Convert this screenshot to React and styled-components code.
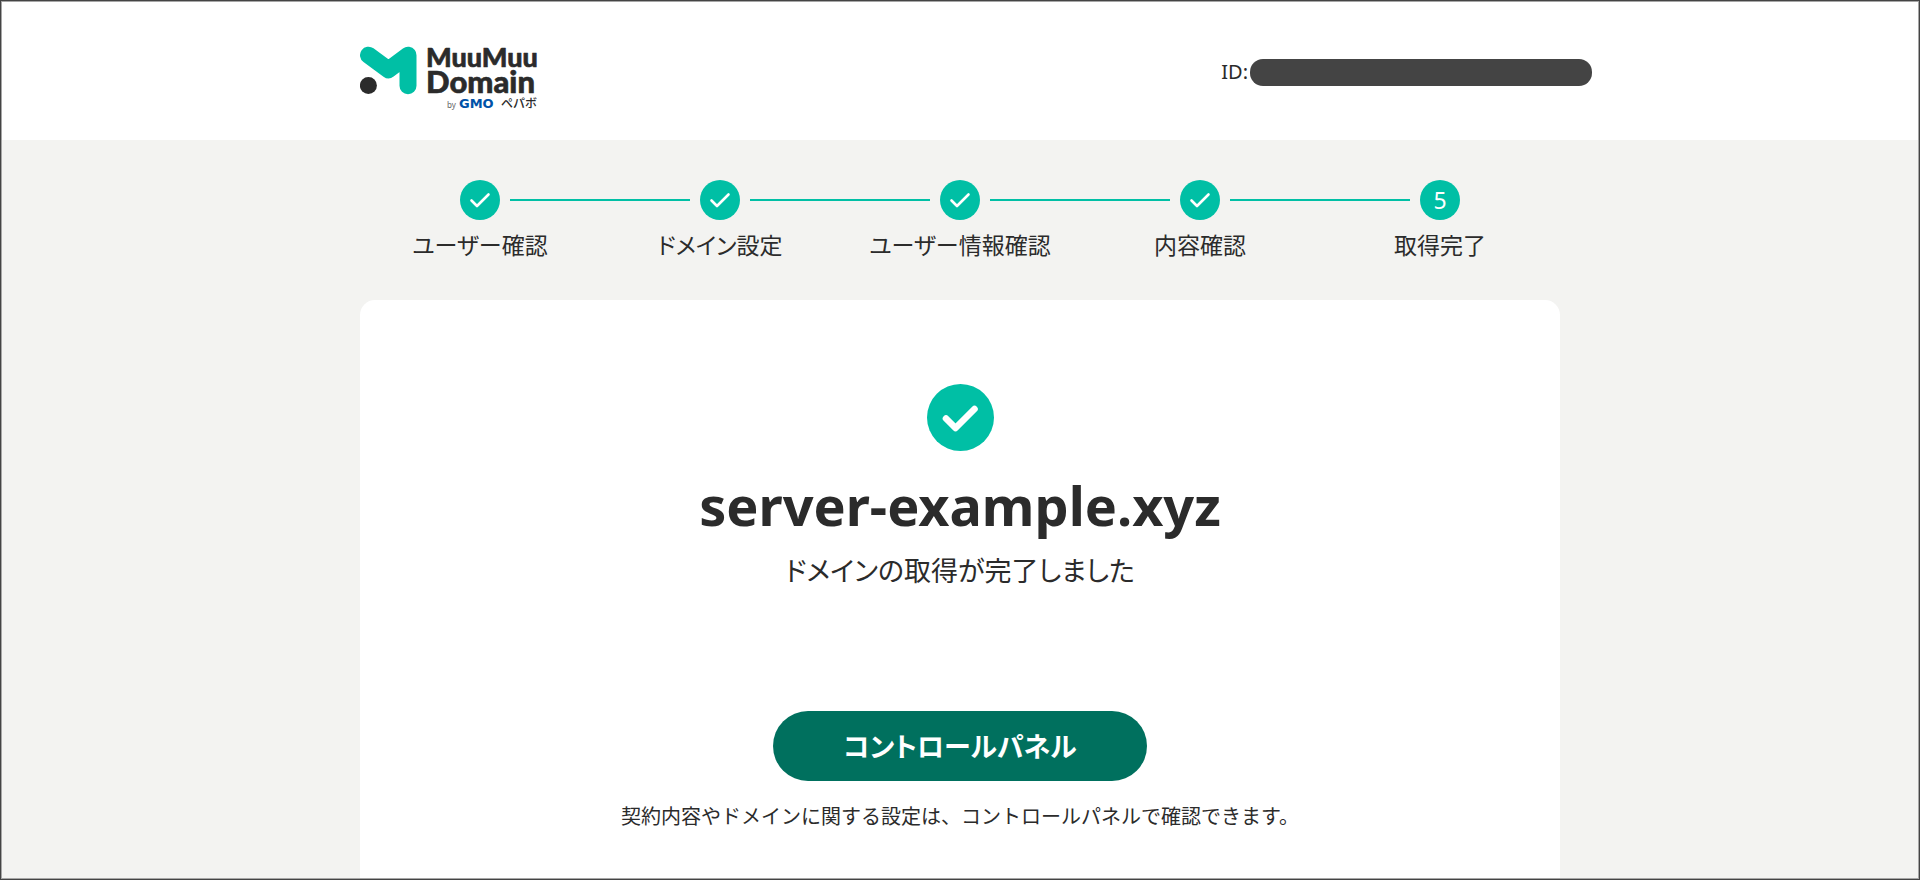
import React from 'react';
import styled, { createGlobalStyle } from 'styled-components';

const GlobalStyle = createGlobalStyle`
    * {
        box-sizing: border-box;
    }

    body {
        margin: 0;
        color: #2b2b2b;
        background: #f3f3f1;
        font-family: 'Noto Sans', 'Noto Sans CJK JP', sans-serif;
    }
`;

const Page = styled.div`
    display: flex;
    flex-flow: column;
    min-height: 100vh;
    border: 1px solid #444444;
    outline: 1px solid #a6a6a6;
    outline-offset: -2px;
`;

const Header = styled.header`
    background: #ffffff;
    padding: 32px 24px 29px;
`;

const HeaderInner = styled.div`
    display: flex;
    justify-content: space-between;
    align-items: center;
    max-width: 1200px;
    margin: 0 auto;
`;

const LogoLink = styled.a`
    display: block;

    svg {
        display: block;
    }
`;

const Account = styled.div`
    display: flex;
    align-items: flex-end;
    gap: 2px;
    margin-right: -32px;
    font-size: 20px;
    line-height: 28px;
`;

const HiddenId = styled.span`
    width: 342px;
    height: 27px;
    border-radius: 13px;
    background: #444444;
`;

const Main = styled.main`
    display: flex;
    flex-flow: column;
    flex: 1;
    width: 100%;
    max-width: 1200px;
    margin: 0 auto;
    padding-top: 40px;
`;

const Steps = styled.ol`
    display: grid;
    grid-template-columns: repeat(5, 1fr);
    margin: 0;
    padding: 0;
    list-style: none;
`;

const Step = styled.li`
    position: relative;
    display: flex;
    flex-flow: column;
    align-items: center;
    gap: 8px;
    font-size: 23px;
    line-height: 34px;
    font-feature-settings: 'palt';

    &:not(:last-child)::after {
        content: '';
        position: absolute;
        top: 19px;
        left: calc(50% + 30px);
        right: calc(-50% + 30px);
        height: 2px;
        background: #00bfa5;
    }
`;

const StepMark = styled.span`
    display: flex;
    align-items: center;
    justify-content: center;
    width: 40px;
    height: 40px;
    border-radius: 50%;
    color: #ffffff;
    background: #00bfa5;
`;

const Card = styled.section`
    display: flex;
    flex-flow: column;
    align-items: center;
    flex: 1;
    margin-top: 38px;
    padding: 84px 40px 40px;
    border-radius: 15px 15px 0 0;
    background: #ffffff;
    text-align: center;
`;

const DomainName = styled.h1`
    margin: 16px 0 0;
    font-size: 54px;
    line-height: 76px;
`;

const Message = styled.p`
    margin: 8px 0 0;
    font-size: 27px;
    line-height: 40px;
    font-feature-settings: 'palt';
`;

const PanelButton = styled.button`
    width: 374px;
    height: 70px;
    margin-top: 120px;
    padding: 0 0 2px;
    border: none;
    border-radius: 35px;
    color: #ffffff;
    background: #00705e;
    font-family: inherit;
    font-size: 27px;
    font-weight: 700;
    font-feature-settings: 'palt';
    cursor: pointer;
`;

const Note = styled.p`
    margin: 20px 0 0;
    font-size: 20px;
    line-height: 32px;
`;

const steps = [
    { label: 'ユーザー確認', done: true },
    { label: 'ドメイン設定', done: true },
    { label: 'ユーザー情報確認', done: true },
    { label: '内容確認', done: true },
    { label: '取得完了', done: false },
];

const Logo = () => (
    <svg width='184' height='78' viewBox='0 -12 184 78' role='img' aria-label='MuuMuu Domain'>
        <path
            d='M8.5 10.2 L28.5 24.8 L48 10.2 V40.8'
            fill='none'
            stroke='#00bfa5'
            strokeWidth='17'
            strokeLinecap='round'
            strokeLinejoin='round'
        />
        <circle cx='8.4' cy='40.6' r='8.5' fill='#2b2b2b' />
        <g
            fill='#2b2b2b'
            stroke='#2b2b2b'
            strokeLinejoin='round'
            fontFamily='Lato, sans-serif'
            fontWeight='900'
        >
            <text x='66' y='22' fontSize='27' strokeWidth='0.6'>MuuMuu</text>
            <text x='66' y='48' fontSize='31' strokeWidth='0.6'>Domain</text>
        </g>
        <text x='87' y='63' fill='#666666' fontFamily='Noto Sans, sans-serif' fontSize='8'>by</text>
        <text x='99' y='63' fill='#0052a8' fontFamily='DejaVu Sans, sans-serif' fontWeight='700' fontSize='13'>GMO</text>
        <text x='141' y='63' fill='#2b2b2b' fontFamily='Noto Sans CJK JP, sans-serif' fontWeight='500' fontSize='12'>ペパボ</text>
    </svg>
);

const StepCheck = () => (
    <svg width='40' height='40' viewBox='0 0 40 40' aria-hidden='true'>
        <path
            d='M11.5 20.5 L17 26 L28.5 14.5'
            fill='none'
            stroke='#ffffff'
            strokeWidth='2.6'
            strokeLinecap='round'
            strokeLinejoin='round'
        />
    </svg>
);

const DoneIcon = () => (
    <svg width='67' height='67' viewBox='0 0 67 67' aria-hidden='true'>
        <circle cx='33.5' cy='33.5' r='33.5' fill='#00bfa5' />
        <path
            d='M19 34.5 L28.5 44 L47.5 25'
            fill='none'
            stroke='#ffffff'
            strokeWidth='6.6'
            strokeLinecap='round'
            strokeLinejoin='round'
        />
    </svg>
);

const App = () => {
    return (
        <>
            <GlobalStyle />
            <Page>
                <Header>
                    <HeaderInner>
                        <LogoLink href='#'>
                            <Logo />
                        </LogoLink>
                        <Account>
                            <span>ID:</span>
                            <HiddenId />
                        </Account>
                    </HeaderInner>
                </Header>
                <Main>
                    <Steps>
                        {
                            steps.map(({ label, done }, index) => (
                                <Step key={label}>
                                    <StepMark>{done ? <StepCheck /> : index + 1}</StepMark>
                                    <span>{label}</span>
                                </Step>
                            ))
                        }
                    </Steps>
                    <Card>
                        <DoneIcon />
                        <DomainName>server-example.xyz</DomainName>
                        <Message>ドメインの取得が完了しました</Message>
                        <PanelButton type='button'>コントロールパネル</PanelButton>
                        <Note>契約内容やドメインに関する設定は、コントロールパネルで確認できます。</Note>
                    </Card>
                </Main>
            </Page>
        </>
    )
}

export default App;
